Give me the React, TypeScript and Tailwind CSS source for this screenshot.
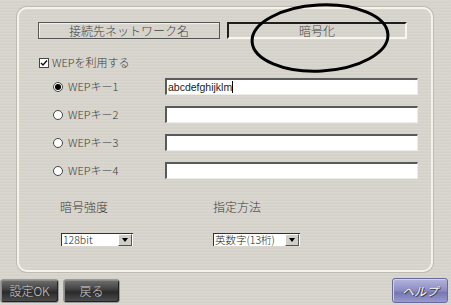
import React from 'react';

const FONT = "font-['Noto_Sans_CJK_JP','Noto_Sans',sans-serif] font-light";

function Radio({ checked }: { checked?: boolean }) {
  return (
    <span className="w-[10px] h-[10px] rounded-full bg-white border border-[#444] flex items-center justify-center shrink-0">
      {checked && <span className="w-[6px] h-[6px] rounded-full bg-black" />}
    </span>
  );
}

function KeyRow({ n, value, checked }: { n: number; value?: string; checked?: boolean }) {
  return (
    <div className="flex items-center h-[17px] ml-[34px]">
      <Radio checked={checked} />
      <span className="ml-[5px] w-[97px] text-[11px] text-[#3a3a3a] leading-none">WEPキー{n}</span>
      <div className="w-[253px] h-[17px] bg-white border-t-2 border-l-2 border-[#5a5a5a] border-r border-b border-r-[#eeeee8] border-b-[#eeeee8] flex items-center px-[1px]">
        {value && (
          <span className="text-[10.5px] text-[#222] leading-none font-['Liberation_Sans',sans-serif] font-normal">{value}</span>
        )}
        {value && <span className="w-px h-[12px] bg-black" />}
      </div>
    </div>
  );
}

function Select({ label, w }: { label: string; w: string }) {
  return (
    <div className={`${w} h-[13px] bg-white border-l border-t border-[#333] flex items-center justify-between`}>
      <span className="text-[10.5px] leading-none text-[#222] pl-[1px]">{label}</span>
      <span className="w-[14px] h-[12px] mr-[1px] bg-[#cfcfc8] border border-t-white border-l-white border-r-[#555] border-b-[#555] flex items-center justify-center">
        <span className="w-0 h-0 border-l-[3px] border-r-[3px] border-t-[4px] border-l-transparent border-r-transparent border-t-black" />
      </span>
    </div>
  );
}

const darkBtn =
  'h-[24px] rounded-[3px] border border-[#9a9a9a] shadow-[inset_1px_1px_0_#8a8a8a,inset_-1px_-1px_0_#222] bg-[linear-gradient(180deg,#707070,#444_40%,#2a2a2a_55%,#505050)] text-[12px] text-[#d0d0d0] leading-none';

export default function App() {
  return (
    <div
      className={`relative w-[451px] h-[305px] overflow-hidden ${FONT} bg-[#d6d4cb] bg-[repeating-linear-gradient(180deg,#d9d7cf_0px,#d9d7cf_1px,#d2d0c7_2px,#d4d2ca_3px)]`}
    >
      <div className="ml-[17px] mt-[7px] w-[416px] h-[265px] rounded-[10px] border-2 border-[#f5f3e8] shadow-[0_0_0_1px_#bdbbb2] flex flex-col">
        <div className="mt-[13px] ml-[19px] flex gap-[7px]">
          <div className="w-[182px] h-[17px] border border-[#555] shadow-[inset_1px_1px_0_#f0efe8] flex items-center justify-center text-[12px] text-[#444] leading-none">
            接続先ネットワーク名
          </div>
          <div className="w-[180px] h-[17px] border-t-2 border-l-2 border-[#1e1e1e] border-r-2 border-b-2 border-r-[#f7f6ee] border-b-[#f7f6ee] flex items-center justify-center text-[12px] text-[#444] leading-none">
            暗号化
          </div>
        </div>

        <div className="mt-[17px] ml-[20px] h-[13px] flex items-center">
          <span className="w-[10px] h-[10px] bg-white border border-[#444] flex items-center justify-center">
            <svg width="8" height="8" viewBox="0 0 8 8">
              <path d="M1 4 L3 6 L7 1.5" stroke="#111" strokeWidth="1.4" fill="none" />
            </svg>
          </span>
          <span className="ml-[3px] text-[11px] text-[#3a3a3a] leading-none">WEPを利用する</span>
        </div>

        <div className="mt-[9px] flex flex-col gap-[11px]">
          <KeyRow n={1} checked value="abcdefghijklm" />
          <KeyRow n={2} />
          <KeyRow n={3} />
          <KeyRow n={4} />
        </div>

        <div className="mt-[22px] flex h-[12px] items-center text-[12px] text-[#3a3a3a] leading-none">
          <span className="ml-[41px] w-[153px]">暗号強度</span>
          <span>指定方法</span>
        </div>

        <div className="mt-[20px] flex">
          <div className="ml-[42px] w-[152px]">
            <Select label="128bit" w="w-[72px]" />
          </div>
          <Select label="英数字(13桁)" w="w-[87px]" />
        </div>
      </div>

      <div className="mt-[6px] flex items-center">
        <button className={`w-[59px] ${darkBtn}`}>設定OK</button>
        <button className={`ml-[4px] w-[57px] ${darkBtn}`}>戻る</button>
        <button className="ml-auto mr-[3px] w-[56px] h-[25px] rounded-[3px] border border-[#6a6a9a] shadow-[inset_1px_1px_0_#d0d0ee] bg-[linear-gradient(180deg,#b4b4dc,#8c8cc4_50%,#7676b2_60%,#9a9ad0)] text-[12px] italic font-normal text-white leading-none [text-shadow:0_0_1px_#333,1px_1px_0_#444]">
          ヘルプ
        </button>
      </div>

      <svg className="absolute left-[248px] top-[1px] pointer-events-none" width="144" height="74" viewBox="0 0 144 74">
        <ellipse cx="72" cy="37" rx="68" ry="33" fill="none" stroke="#000" strokeWidth="3" transform="rotate(-3 72 37)" />
      </svg>
    </div>
  );
}
